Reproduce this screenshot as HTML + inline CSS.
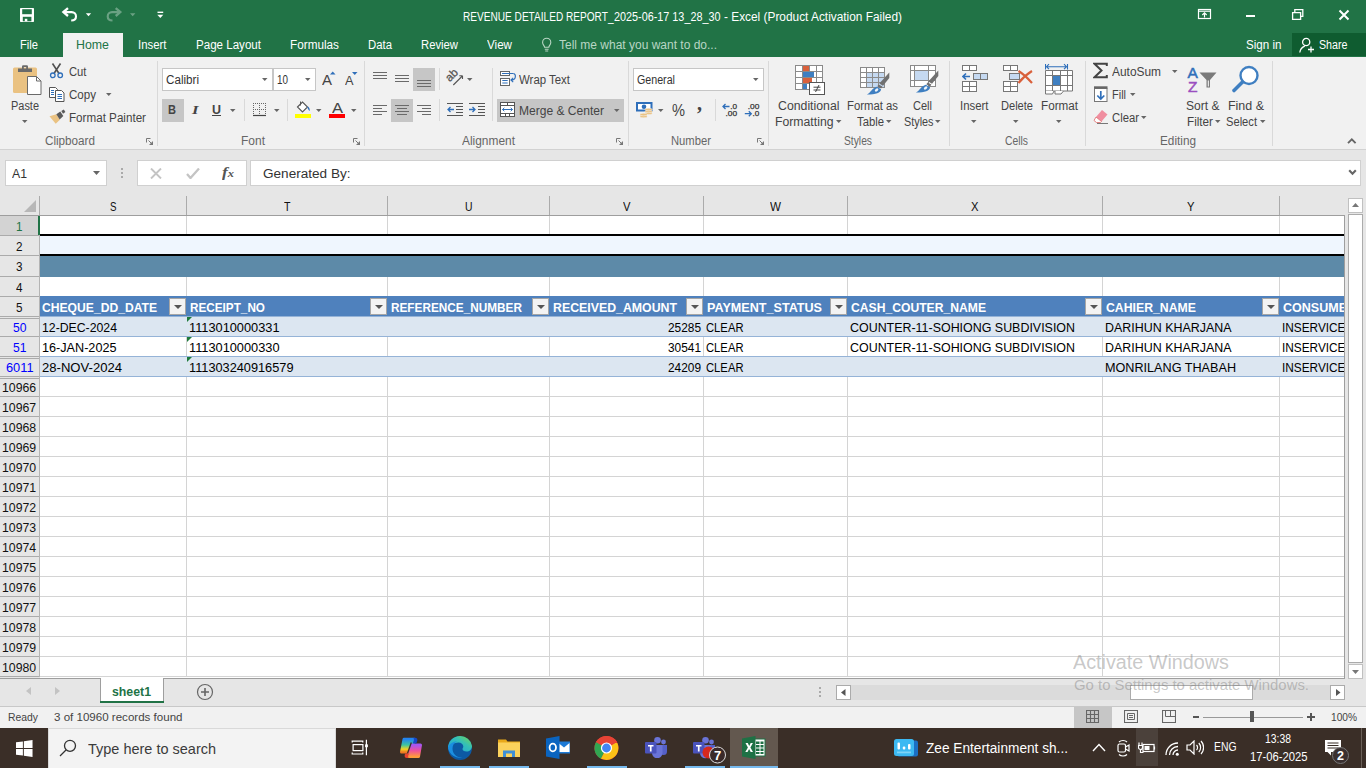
<!DOCTYPE html>
<html><head><meta charset="utf-8"><title>Excel</title>
<style>
*{box-sizing:border-box;margin:0;padding:0}
html,body{width:1366px;height:768px;overflow:hidden;background:#fff}
body{position:relative;font-family:"Liberation Sans",sans-serif;font-size:12px;color:#444}
.a{position:absolute}
.t{position:absolute;white-space:nowrap;transform-origin:0 50%;line-height:16px;height:16px}
.w{color:#fff}
#title{left:0;top:0;width:1366px;height:57px;background:#217346}
#hometab{left:63px;top:33px;width:60px;height:24px;background:#f1f1f1}
#share{left:1292px;top:33px;width:74px;height:23px;background:#0f5c30}
#ribbon{left:0;top:57px;width:1366px;height:92px;background:#f1f1f1}
#ribline{left:0;top:149px;width:1366px;height:1px;background:#d2d2d2}
#fbar{left:0;top:150px;width:1366px;height:46px;background:#e6e6e6}
#grid{left:0;top:196px;width:1366px;height:481px;background:#fff}
#tabs{left:0;top:677px;width:1366px;height:30px;background:#e6e6e6}
#status{left:0;top:707px;width:1366px;height:21px;background:#f1f1f1}
#task{left:0;top:728px;width:1366px;height:40px;background:#3a2e27}
.sep{position:absolute;width:1px;background:#d9d9d9;top:66px;height:78px}
.g{color:#666}
.box{background:#fff;border:1px solid #c6c6c6}
.gl{position:absolute;top:95px;height:16px;line-height:16px;color:#555;font-size:12px}

.cf{font-size:12.500px;color:#000;margin-top:1px}
.hd{font-size:13px;color:#111;margin-top:1px}
.rn{font-size:13.500px;color:#111;margin-top:1px}
.vl{position:absolute;width:1px;background:#d4d4d4}
.hl{position:absolute;height:1px;background:#d4d4d4;left:40px;width:1304px}
.fb{position:absolute;width:17px;height:17px;background:#f3f3f3;border:1px solid #a6a6a6}
.fb:after{content:"";position:absolute;left:4px;top:6px;border:4px solid transparent;border-top:4px solid #555;border-bottom:0}
.tri{position:absolute;width:0;height:0;border-top:5px solid #1e7a3c;border-right:5px solid transparent}
</style></head><body>
<div class="a" id="title"></div>
<div class="a" id="hometab"></div>
<div class="a" id="share"></div>

<!-- title bar -->
<svg class="a" style="left:18px;top:6px" width="150" height="20" viewBox="0 0 150 20" fill="none" stroke="#fff">
 <rect x="2" y="1.900" width="14" height="14" rx=".700" fill="#fff" stroke="none"/><rect x="4.200" y="3.200" width="9.600" height="5" fill="#217346" stroke="none"/><rect x="4.800" y="10.800" width="8.600" height="4.500" fill="#217346" stroke="none"/><rect x="6.800" y="12.800" width="2.500" height="2.500" fill="#fff" stroke="none"/>
 <path d="M50 2.200l-4.600 3.900 4.600 3.900" stroke-width="2.300"/><path d="M46.500 6.100h7.200a4.300 4.300 0 0 1 4.300 4.300c0 2.400-1.900 4-4.800 4.100" stroke-width="2.100"/>
 <path d="M67.800 7.200h5.400l-2.700 3z" fill="#fff" stroke="none"/>
 <g opacity=".33"><path d="M97.700 2.200l4.600 3.900-4.600 3.900" stroke-width="2.300"/><path d="M101.200 6.100h-7.200a4.300 4.300 0 0 0-4.300 4.300c0 2.400 1.900 4 4.800 4.100" stroke-width="2.100"/><path d="M112 7.200h5.400l-2.700 3z" fill="#fff" stroke="none"/></g>
 <path d="M139.500 6.300h5.700" stroke-width="1.400"/><path d="M139.300 8.800h6l-3 3.300z" fill="#fff" stroke="none"/>
</svg>
<span class="t w" style="transform:scaleX(0.8074);left:462.5px;top:9px;font-size:12.5px">REVENUE DETAILED REPORT_</span><span class="t w" style="transform:scaleX(0.8656);left:613.5px;top:9px;font-size:12.5px">2025-06-17 13_28_30</span><span class="t w" style="transform:scaleX(0.9489);left:723.5px;top:9px;font-size:12.5px">- Excel (Product Activation Failed)</span>
<svg class="a" style="left:1194px;top:5px" width="165" height="20" viewBox="0 0 165 20" fill="none" stroke="#fff">
 <rect x="4.5" y="4.5" width="12" height="9" stroke-width="1.2"/><path d="M4.5 6.2h12" stroke-width="1.2"/><path d="M10.5 12.5v-4.5M8.3 10l2.2-2.2 2.2 2.2" stroke-width="1.2"/>
 <path d="M52 11h9" stroke-width="2"/>
 <path d="M98.6 7.6h8v6.8h-8z" stroke-width="1.3"/><path d="M100.8 7.4v-2.8h8v6.8h-2" stroke-width="1.3"/>
 <path d="M145.5 5.5l9 9M154.5 5.5l-9 9" stroke-width="2"/>
</svg>
<!-- tabs -->
<span class="t w" style="transform:scaleX(0.8930);left:20px;top:37px;font-size:12.5px">File</span>
<span class="t" style="transform:scaleX(0.9897);left:76px;top:37px;font-size:12.5px;color:#217346">Home</span>
<span class="t w" style="transform:scaleX(0.9115);left:138px;top:37px;font-size:12.5px">Insert</span>
<span class="t w" style="transform:scaleX(0.9259);left:196px;top:37px;font-size:12.5px">Page Layout</span>
<span class="t w" style="transform:scaleX(0.9406);left:290px;top:37px;font-size:12.5px">Formulas</span>
<span class="t w" style="transform:scaleX(0.9089);left:368px;top:37px;font-size:12.5px">Data</span>
<span class="t w" style="transform:scaleX(0.9024);left:421px;top:37px;font-size:12.5px">Review</span>
<span class="t w" style="transform:scaleX(0.9302);left:487px;top:37px;font-size:12.5px">View</span>
<svg class="a" style="left:540px;top:36px" width="14" height="18" viewBox="0 0 14 18" fill="none" stroke="#b9d6c4" stroke-width="1.1"><path d="M4.6 11.2c0-1.6-2-2.4-2-4.8a4.1 4.1 0 0 1 8.2 0c0 2.400-2 3.200-2 4.800z"/><path d="M4.800 13.200h3.800M5.200 15h3"/></svg>
<span class="t" style="transform:scaleX(0.9595);left:559px;top:37px;font-size:12.5px;color:#b9d6c4">Tell me what you want to do...</span>
<span class="t w" style="transform:scaleX(0.9285);left:1246px;top:37px;font-size:12.5px">Sign in</span>
<svg class="a" style="left:1298px;top:36px" width="18" height="18" viewBox="0 0 18 18" fill="none" stroke="#fff" stroke-width="1.300"><circle cx="8.200" cy="6" r="3.600"/><path d="M1.800 16.500c.5-3.600 2.800-5.600 5-6.400M9.500 10.200"/><path d="M13 10.500v6M10 13.500h6"/></svg>
<span class="t w" style="transform:scaleX(0.8543);left:1318.500px;top:37px;font-size:12.5px">Share</span>
<div class="a" id="ribbon"></div>
<div class="a" id="ribline"></div>
<!-- ===== Clipboard ===== -->
<svg class="a" style="left:10px;top:62px" width="36" height="36" viewBox="0 0 36 36">
 <rect x="3" y="5.500" width="24" height="25.500" rx="1.500" fill="#eac282"/>
 <path d="M8 6.500h14v3.500h-14z" fill="#6a6a6a"/><path d="M12 7v-2.500a1.200 1.200 0 0 1 1.200-1.200h3.600a1.200 1.200 0 0 1 1.200 1.200v2.500h-1.800v-2h-2.400v2z" fill="#6a6a6a"/>
 <path d="M17.500 14.500h9l4.500 4.500v13.500h-13.500z" fill="#fff" stroke="#6a6a6a" stroke-width="1"/><path d="M26.500 14.500v4.500h4.500" fill="none" stroke="#6a6a6a"/>
</svg>
<span class="t" style="transform:scaleX(0.9124);left:11px;top:98.4px">Paste</span>
<svg class="a" style="left:22px;top:120px" width="6" height="4"><path d="M0 0h5.500l-2.750 3z" fill="#666"/></svg>
<svg class="a" style="left:48px;top:62px" width="18" height="18" viewBox="0 0 18 18" fill="none">
 <path d="M4.500 1.500l6.500 10M12.500 1.500l-6.500 10" stroke="#505050" stroke-width="1.600"/>
 <circle cx="4.800" cy="13.300" r="2.300" stroke="#2f6fba" stroke-width="1.300"/><circle cx="12.200" cy="13.300" r="2.300" stroke="#2f6fba" stroke-width="1.300"/>
</svg>
<span class="t" style="transform:scaleX(0.9365);left:69px;top:64.4px">Cut</span>
<svg class="a" style="left:48px;top:86px" width="18" height="17" viewBox="0 0 18 17" fill="#fff" stroke="#555" stroke-width="1">
 <path d="M1.500 1.500h6l2 2v8h-8z"/><path d="M3 4.500h3M3 6.500h3M3 8.500h3" stroke="#2f6fba"/>
 <path d="M7.500 4.500h6l2.500 2.500v8.500h-8.500z"/><path d="M9.500 8.500h4.500M9.500 10.500h4.500M9.500 12.500h4.500" stroke="#2f6fba"/>
</svg>
<span class="t" style="transform:scaleX(0.9637);left:69px;top:87.4px">Copy</span>
<svg class="a" style="left:106px;top:93px" width="6" height="4"><path d="M0 0h5.500l-2.750 3z" fill="#666"/></svg>
<svg class="a" style="left:48px;top:109px" width="18" height="16" viewBox="0 0 18 16">
 <path d="M1.500 7.200l6.800-1.900 3.600 5.400-4.200 4z" fill="#eac282"/><path d="M8.300 5.200l4-2.600 3 4.500-3.600 3.400z" fill="#5a5a5a"/><path d="M13.300 2.100l2.500-1.600 1.600 2.400-2.400 1.800z" fill="#5a5a5a"/>
</svg>
<span class="t" style="transform:scaleX(0.9703);left:69px;top:110.4px">Format Painter</span>
<span class="t g" style="transform:scaleX(0.9732);left:45px;top:133.4px">Clipboard</span>
<svg class="a lau" style="left:146px;top:138px" width="8" height="8" viewBox="0 0 8 8" fill="none" stroke="#777"><path d="M.500 4.500v-4h4"/><path d="M2.500 2.500l3.500 3.500"/><path d="M7 3v4h-4z" fill="#777" stroke="none"/></svg>
<div class="sep" style="left:157px;top:61px;height:85px"></div>
<!-- ===== Font ===== -->
<div class="a box" style="left:162px;top:68px;width:111px;height:23px"></div>
<div class="a box" style="left:273px;top:68px;width:43px;height:23px"></div>
<span class="t" style="transform:scaleX(0.9701);left:166px;top:72.4px;color:#333">Calibri</span>
<svg class="a" style="left:262px;top:78px" width="6" height="4"><path d="M0 0h5.500l-2.750 3z" fill="#666"/></svg>
<span class="t" style="transform:scaleX(0.8234);left:277px;top:72.4px;color:#333">10</span>
<svg class="a" style="left:305px;top:78px" width="6" height="4"><path d="M0 0h5.500l-2.750 3z" fill="#666"/></svg>
<span class="t" style="transform:scaleX(0.9984);left:322px;top:72.4px;font-size:15px">A</span>
<svg class="a" style="left:330px;top:71px" width="6" height="4"><path d="M0 3.500h5.500l-2.750-3z" fill="#2f6fba"/></svg>
<span class="t" style="transform:scaleX(0.9802);left:345px;top:73.4px;font-size:13px">A</span>
<svg class="a" style="left:352px;top:72px" width="6" height="4"><path d="M0 0h5.500l-2.750 3z" fill="#2f6fba"/></svg>
<div class="a" style="left:162px;top:99px;width:22px;height:23px;background:#c6c6c6"></div>
<span class="t" style="transform:scaleX(0.8519);left:168px;top:102.4px;font-weight:bold;font-size:13px">B</span>
<span class="t" style="transform:scaleX(1.2840);left:192px;top:102.4px;font-style:italic;font-weight:bold;font-size:13px;font-family:'Liberation Serif',serif">I</span>
<span class="t" style="transform:scaleX(0.9584);left:212px;top:102.4px;font-size:13px;font-weight:bold;text-decoration:underline">U</span>
<svg class="a" style="left:230px;top:109px" width="6" height="4"><path d="M0 0h5.500l-2.750 3z" fill="#666"/></svg>
<div class="sep" style="left:244px;top:99px;height:22px"></div>
<svg class="a" style="left:252px;top:102px" width="15" height="15" viewBox="0 0 15 15" fill="none" stroke="#666" stroke-dasharray="1 1"><path d="M1 1.500h13M1 7.500h13M1.500 1v13M7.500 1v13M13.500 1v13"/><path d="M1 13.500h13" stroke-dasharray="none" stroke="#444" stroke-width="1.200"/></svg>
<svg class="a" style="left:274px;top:109px" width="6" height="4"><path d="M0 0h5.500l-2.750 3z" fill="#666"/></svg>
<div class="sep" style="left:287px;top:99px;height:22px"></div>
<svg class="a" style="left:294px;top:100px" width="18" height="14" viewBox="0 0 18 14" fill="none"><path d="M3.500 7l5-5 5 5-5 5z" fill="#fff" stroke="#555" stroke-width="1.100"/><path d="M6.500 1.500v4" stroke="#555"/><path d="M13.500 6.500c1.500.5 2.500 2 2.200 4.500-1-.5-1.500-2-2.200-3z" fill="#2f6fba"/></svg>
<div class="a" style="left:295px;top:114px;width:16px;height:4px;background:#ffff00"></div>
<svg class="a" style="left:316px;top:109px" width="6" height="4"><path d="M0 0h5.500l-2.750 3z" fill="#666"/></svg>
<span class="t" style="transform:scaleX(1.1773);left:332px;top:100.4px;font-size:14px">A</span>
<div class="a" style="left:329px;top:114px;width:16px;height:4px;background:#ff0000"></div>
<svg class="a" style="left:351px;top:109px" width="6" height="4"><path d="M0 0h5.500l-2.750 3z" fill="#666"/></svg>
<span class="t g" style="transform:scaleX(0.9993);left:241px;top:133.4px">Font</span>
<svg class="a lau" style="left:353px;top:138px" width="8" height="8" viewBox="0 0 8 8" fill="none" stroke="#777"><path d="M.500 4.500v-4h4"/><path d="M2.500 2.500l3.500 3.500"/><path d="M7 3v4h-4z" fill="#777" stroke="none"/></svg>
<div class="sep" style="left:364px;top:61px;height:85px"></div>

<div class="a" id="fbar"></div>
<div class="a" id="grid"></div>
<div class="a" id="tabs"></div>
<div class="a" id="status"></div>
<div class="a" id="task"></div>
<!-- ===== Alignment ===== -->
<svg class="a" style="left:373px;top:72px" width="15" height="9" fill="#6a6a6a"><rect x="0" y="0" width="14" height="1"/><rect x="0" y="3" width="14" height="1"/><rect x="0" y="6" width="14" height="1"/></svg>
<svg class="a" style="left:395px;top:75px" width="15" height="9" fill="#6a6a6a"><rect x="0" y="0" width="14" height="1"/><rect x="0" y="3" width="14" height="1"/><rect x="0" y="6" width="14" height="1"/></svg>
<div class="a" style="left:413px;top:68px;width:22px;height:23px;background:#c6c6c6"></div>
<svg class="a" style="left:417px;top:80px" width="15" height="9" fill="#6a6a6a"><rect x="0" y="0" width="14" height="1"/><rect x="0" y="3" width="14" height="1"/><rect x="0" y="6" width="14" height="1"/></svg>
<div class="sep" style="left:439px;top:68px;height:22px"></div>
<svg class="a" style="left:446px;top:70px" width="20" height="18" viewBox="0 0 20 18" fill="none" stroke="#555" stroke-width="1.100"><path d="M7.300 15l9-9M16.500 5.800h-3.200M16.500 5.800v3.200"/><text x="0" y="0" transform="translate(3.800 12.300) rotate(-45)" font-size="11.500" font-family="Liberation Sans,sans-serif" fill="#555" stroke="#555" stroke-width=".300">ab</text></svg>
<svg class="a" style="left:467px;top:78px" width="6" height="4"><path d="M0 0h5.500l-2.750 3z" fill="#666"/></svg>
<div class="sep" style="left:492px;top:68px;height:53px"></div>
<svg class="a" style="left:499px;top:70px" width="18" height="17" viewBox="0 0 18 17" fill="none" stroke="#666"><rect x="1.500" y="1.500" width="9" height="4" fill="#fff"/><rect x="1.500" y="8.500" width="9" height="7" fill="#fff"/><path d="M3 3.500h11.500M3.300 10.500h5.400M3.300 13h5.400" stroke="#2f6fba"/><path d="M14.500 3.500c2.800 .800 2.800 6.500-2.300 6.500M14.200 7.800l-2.300 2.200 2.300 2.200" stroke="#2f6fba" stroke-width="1.100"/></svg>
<span class="t" style="transform:scaleX(0.9519);left:519px;top:72.4px">Wrap Text</span>
<svg class="a" style="left:373px;top:105px" width="15" height="12" fill="#6a6a6a"><rect x="0" y="0" width="14" height="1"/><rect x="0" y="3" width="9" height="1"/><rect x="0" y="6" width="14" height="1"/><rect x="0" y="9" width="9" height="1"/></svg>
<div class="a" style="left:391px;top:99px;width:22px;height:23px;background:#c6c6c6"></div>
<svg class="a" style="left:395px;top:105px" width="15" height="12" fill="#6a6a6a"><rect x="0" y="0" width="14" height="1"/><rect x="2" y="3" width="10" height="1"/><rect x="0" y="6" width="14" height="1"/><rect x="2" y="9" width="10" height="1"/></svg>
<svg class="a" style="left:417px;top:105px" width="15" height="12" fill="#6a6a6a"><rect x="0" y="0" width="14" height="1"/><rect x="5" y="3" width="9" height="1"/><rect x="0" y="6" width="14" height="1"/><rect x="5" y="9" width="9" height="1"/></svg>
<div class="sep" style="left:439px;top:99px;height:22px"></div>
<svg class="a" style="left:447px;top:103px" width="16" height="14" viewBox="0 0 16 14" fill="none" stroke="#555"><path d="M0 .500h16M9 3.500h7M9 6.500h7M9 9.500h7M0 12.500h16"/><path d="M1 6.500h6M3.500 4l-2.500 2.500 2.500 2.500" stroke="#2f6fba" stroke-width="1.300"/></svg>
<svg class="a" style="left:469px;top:103px" width="16" height="14" viewBox="0 0 16 14" fill="none" stroke="#555"><path d="M0 .500h16M9 3.500h7M9 6.500h7M9 9.500h7M0 12.500h16"/><path d="M0 6.500h6M3.500 4l2.500 2.500-2.500 2.500" stroke="#2f6fba" stroke-width="1.300"/></svg>
<div class="a" style="left:497px;top:99px;width:127px;height:23px;background:#c6c6c6"></div>
<svg class="a" style="left:500px;top:102px" width="15" height="15" viewBox="0 0 15 15" fill="none" stroke="#555"><rect x=".500" y=".500" width="14" height="14" fill="#fff"/><path d="M.500 3.500h14M.500 11.500h14M7.500 .500v3M5.500 11.500v3M9.500 11.500v3"/><path d="M2.500 7.500h10M4.300 5.800l-1.800 1.700 1.800 1.700M10.700 5.800l1.800 1.700-1.800 1.700" stroke="#2f6fba"/></svg>
<span class="t" style="transform:scaleX(1.0035);left:519px;top:103.4px">Merge &amp; Center</span>
<svg class="a" style="left:614px;top:109px" width="6" height="4"><path d="M0 0h5.500l-2.750 3z" fill="#666"/></svg>
<span class="t g" style="transform:scaleX(0.9930);left:462px;top:133.4px">Alignment</span>
<svg class="a lau" style="left:616px;top:138px" width="8" height="8" viewBox="0 0 8 8" fill="none" stroke="#777"><path d="M.500 4.500v-4h4"/><path d="M2.500 2.500l3.500 3.500"/><path d="M7 3v4h-4z" fill="#777" stroke="none"/></svg>
<div class="sep" style="left:628px;top:61px;height:85px"></div>
<!-- ===== Number ===== -->
<div class="a box" style="left:633px;top:68px;width:131px;height:23px"></div>
<span class="t" style="transform:scaleX(0.8899);left:637px;top:72.4px;color:#333">General</span>
<svg class="a" style="left:753px;top:78px" width="6" height="4"><path d="M0 0h5.500l-2.750 3z" fill="#666"/></svg>
<svg class="a" style="left:636px;top:101px" width="17" height="17" viewBox="0 0 17 17" fill="none"><rect x="1" y="2" width="14.500" height="7.500" fill="#fff" stroke="#2f6fba" stroke-width="2"/><circle cx="8" cy="5.700" r="2.300" fill="#2f6fba"/><g fill="#eac282" stroke="#f1f1f1" stroke-width=".500"><ellipse cx="12.600" cy="12.300" rx="3.600" ry="1.300"/><ellipse cx="12.600" cy="10.400" rx="3.600" ry="1.300"/><ellipse cx="12.600" cy="8.500" rx="3.600" ry="1.300"/><ellipse cx="7.600" cy="15.400" rx="3.600" ry="1.300"/><ellipse cx="7.600" cy="13.500" rx="3.600" ry="1.300"/></g></svg>
<svg class="a" style="left:658px;top:109px" width="6" height="4"><path d="M0 0h5.500l-2.750 3z" fill="#666"/></svg>
<span class="t" style="transform:scaleX(0.8860);left:672px;top:102.4px;font-size:16.500px">%</span>
<span class="t" style="transform:scaleX(1.0000);left:697px;top:95.4px;font-size:20px;font-weight:bold;font-family:'Liberation Serif',serif">,</span>
<div class="sep" style="left:715px;top:99px;height:22px"></div>
<svg class="a" style="left:722px;top:102px" width="16" height="16" viewBox="0 0 16 16" font-family="Liberation Sans,sans-serif" font-size="8" fill="#333" stroke="#333" stroke-width=".250"><path d="M1 4.500h6.500M3.500 2l-2.500 2.500 2.500 2.500" fill="none" stroke="#2f6fba" stroke-width="1.300"/><text x="8.300" y="7" textLength="6.800" lengthAdjust="spacingAndGlyphs">.0</text><text x="3.500" y="14.200" textLength="11.600" lengthAdjust="spacingAndGlyphs">.00</text></svg>
<svg class="a" style="left:744px;top:102px" width="16" height="16" viewBox="0 0 16 16" font-family="Liberation Sans,sans-serif" font-size="8" fill="#333" stroke="#333" stroke-width=".250"><text x="3.700" y="7" textLength="11.600" lengthAdjust="spacingAndGlyphs">.00</text><path d="M.800 11.700h6.500M4.800 9.200l2.500 2.500-2.500 2.500" fill="none" stroke="#2f6fba" stroke-width="1.300"/><text x="8.500" y="14.200" textLength="6.800" lengthAdjust="spacingAndGlyphs">.0</text></svg>
<span class="t g" style="transform:scaleX(0.9370);left:671px;top:133.4px">Number</span>
<svg class="a lau" style="left:757px;top:138px" width="8" height="8" viewBox="0 0 8 8" fill="none" stroke="#777"><path d="M.500 4.500v-4h4"/><path d="M2.500 2.500l3.500 3.500"/><path d="M7 3v4h-4z" fill="#777" stroke="none"/></svg>
<div class="sep" style="left:768px;top:61px;height:85px"></div>
<!-- ===== Styles ===== -->
<svg class="a" style="left:795px;top:65px" width="31" height="30" viewBox="0 0 31 30" fill="none">
<rect x=".500" y=".500" width="27" height="24" fill="#fff" stroke="#8a8a8a"/><path d="M.500 6.500h27M.500 12.500h27M.500 18.500h27M7.500 .500v24M14.500 .500v24M21.500 .500v24" stroke="#8a8a8a"/>
<rect x="8" y="1" width="6" height="5" fill="#d9603b"/><rect x="8" y="7" width="11" height="5" fill="#3f7fc1"/><rect x="8" y="13" width="9" height="5" fill="#d9603b"/><rect x="8" y="19" width="4" height="5" fill="#3f7fc1"/>
<rect x="14.500" y="17.500" width="15" height="12" fill="#fff" stroke="#555"/><path d="M18.500 22.200h7M18.500 25h7M24 20l-3.500 7" stroke="#333" stroke-width=".900"/></svg>
<span class="t" style="transform:scaleX(1.0242);left:778px;top:98.4px">Conditional</span>
<span class="t" style="transform:scaleX(1.0199);left:775px;top:114.4px">Formatting</span>
<svg class="a" style="left:836px;top:120px" width="6" height="4"><path d="M0 0h5.500l-2.750 3z" fill="#666"/></svg>
<svg class="a" style="left:860px;top:65px" width="31" height="31" viewBox="0 0 31 31" fill="none">
<rect x=".500" y="2.500" width="24" height="20" fill="#fff" stroke="#8a8a8a"/><rect x="6" y="8" width="18" height="14" fill="#c5d9f1"/><path d="M.500 7.500h24M.500 12.500h24M.500 17.500h24M6.500 2.500v20M12.500 2.500v20M18.500 2.500v20" stroke="#8a8a8a"/>
<g transform="translate(0 0)"><path d="M29.300 7.600v5.400l-6.300 7.700-3.700-2.100z" fill="#707070"/><path d="M18.700 19.400l3.700 2.200-1.300 1.900-3.800-2.300z" fill="#707070"/><path d="M16.800 21.700l4.300 2.500c-.3 3.400-5 5.300-14.300 5.400 4.200-2 5-6.600 10-7.900z" fill="#3f7fc1"/><ellipse cx="16.600" cy="25" rx="2" ry="1.300" transform="rotate(-40 16.600 25)" fill="#fff" opacity=".92"/></g></svg>
<span class="t" style="transform:scaleX(0.9442);left:847px;top:98.4px">Format as</span>
<span class="t" style="transform:scaleX(0.9412);left:857px;top:114.4px">Table</span>
<svg class="a" style="left:886px;top:120px" width="6" height="4"><path d="M0 0h5.500l-2.750 3z" fill="#666"/></svg>
<svg class="a" style="left:909px;top:65px" width="31" height="31" viewBox="0 0 31 31" fill="none">
<rect x="1.500" y=".500" width="25" height="21" fill="#fff" stroke="#8a8a8a"/><rect x="5.500" y="5" width="14" height="10" fill="#c5d9f1"/><path d="M1.500 5.500h25M1.500 15.500h25M5.500 .500v21M19.500 .500v21" stroke="#8a8a8a"/>
<g transform="translate(0 -2)"><path d="M29.300 7.600v5.400l-6.300 7.700-3.700-2.100z" fill="#707070"/><path d="M18.700 19.400l3.700 2.200-1.300 1.900-3.800-2.300z" fill="#707070"/><path d="M16.800 21.700l4.300 2.500c-.3 3.400-5 5.300-14.300 5.400 4.200-2 5-6.600 10-7.900z" fill="#3f7fc1"/><ellipse cx="16.600" cy="25" rx="2" ry="1.300" transform="rotate(-40 16.600 25)" fill="#fff" opacity=".92"/></g></svg>
<span class="t" style="transform:scaleX(0.9191);left:913px;top:98.4px">Cell</span>
<span class="t" style="transform:scaleX(0.9025);left:904px;top:114.4px">Styles</span>
<svg class="a" style="left:935px;top:120px" width="6" height="4"><path d="M0 0h5.500l-2.750 3z" fill="#666"/></svg>
<span class="t g" style="transform:scaleX(0.8566);left:844px;top:133.4px">Styles</span>
<div class="sep" style="left:949px;top:61px;height:85px"></div>
<!-- ===== Cells ===== -->
<svg class="a" style="left:962px;top:65px" width="29" height="28" viewBox="0 0 29 28" fill="none" stroke="#777">
<rect x=".500" y=".500" width="14" height="5" fill="#fff"/><path d="M7.500 .500v5"/>
<rect x="11.500" y="8.500" width="14" height="6" fill="#c5d9f1"/><path d="M18.500 8.500v6"/>
<rect x=".500" y="16.500" width="14" height="10" fill="#fff"/><path d="M.500 21.500h14M7.500 16.500v10"/>
<path d="M1 11.500h7M4 8.500l-3 3 3 3" stroke="#2f6fba" stroke-width="1.600"/></svg>
<span class="t" style="transform:scaleX(0.9495);left:960px;top:98.4px">Insert</span>
<svg class="a" style="left:971px;top:120px" width="6" height="4"><path d="M0 0h5.500l-2.750 3z" fill="#666"/></svg>
<svg class="a" style="left:1003px;top:65px" width="32" height="28" viewBox="0 0 32 28" fill="none" stroke="#777">
<rect x=".500" y=".500" width="14" height="5" fill="#fff"/><path d="M7.500 .500v5"/>
<rect x="6.500" y="8.500" width="10" height="6" fill="#c5d9f1"/>
<rect x=".500" y="16.500" width="14" height="10" fill="#fff"/><path d="M.500 21.500h14M7.500 16.500v10"/>
<path d="M15.500 6c5 3 9 7 13.500 12M29 6c-5 3-9.500 7-13.500 12" stroke="#d9603b" stroke-width="2.200"/></svg>
<span class="t" style="transform:scaleX(0.9225);left:1001px;top:98.4px">Delete</span>
<svg class="a" style="left:1013px;top:120px" width="6" height="4"><path d="M0 0h5.500l-2.750 3z" fill="#666"/></svg>
<svg class="a" style="left:1045px;top:62px" width="29" height="33" viewBox="0 0 29 33" fill="none" stroke="#777">
<path d="M.500 2v5.500M22.500 2v5.500M1.500 4.700h20M4 2.200l-2.500 2.500 2.500 2.500M19 2.200l2.500 2.500-2.500 2.500" stroke="#2f6fba" stroke-width="1.100"/>
<path d="M.500 8.500h27v20.500h-27z" fill="#fff"/><path d="M.500 13.500h27M.500 23.500h27M7.500 8.500v20.500M15.500 8.500v20.500M22.500 8.500v20.500"/>
<path d="M.500 29v3h7l1.500-3M10 29v3h6l2.500-3" fill="#fff"/>
<rect x="8" y="14" width="7" height="9" fill="#3f7fc1" stroke="none"/></svg>
<span class="t" style="transform:scaleX(0.9733);left:1041px;top:98.4px">Format</span>
<svg class="a" style="left:1056px;top:120px" width="6" height="4"><path d="M0 0h5.500l-2.750 3z" fill="#666"/></svg>
<span class="t g" style="transform:scaleX(0.8623);left:1005px;top:133.4px">Cells</span>
<div class="sep" style="left:1085px;top:61px;height:85px"></div>
<!-- ===== Editing ===== -->
<svg class="a" style="left:1093px;top:62px" width="16" height="17" viewBox="0 0 16 17" fill="none"><path d="M13.800 4v-2.200h-12.300l7 6.700-7 6.700h12.300v-2.200" stroke="#444" stroke-width="2"/></svg>
<span class="t" style="transform:scaleX(0.9927);left:1112px;top:64.4px">AutoSum</span>
<svg class="a" style="left:1172px;top:70px" width="6" height="4"><path d="M0 0h5.500l-2.750 3z" fill="#666"/></svg>
<svg class="a" style="left:1093px;top:86px" width="16" height="17" viewBox="0 0 16 17" fill="none"><rect x="1.500" y="2.500" width="12.500" height="13" fill="#fff" stroke="#777"/><path d="M1 1.500h13.500" stroke="#666" stroke-width="2.400"/><path d="M7.800 5v8M4.300 9.500l3.500 3.500 3.500-3.500" stroke="#2f6fba" stroke-width="1.700"/></svg>
<span class="t" style="transform:scaleX(0.9134);left:1112px;top:87.4px">Fill</span>
<svg class="a" style="left:1130px;top:93px" width="6" height="4"><path d="M0 0h5.500l-2.750 3z" fill="#666"/></svg>
<svg class="a" style="left:1093px;top:109px" width="16" height="15" viewBox="0 0 16 15" fill="none"><path d="M9 1l5.500 4.500-6 7-5.500-4.500z" fill="#f08ea0"/><path d="M3 8l5.500 4.500-1 1h-4l-2.500-2z" fill="#fff" stroke="#d66" stroke-width=".800"/><path d="M4 14.500h11" stroke="#777"/></svg>
<span class="t" style="transform:scaleX(0.9412);left:1112px;top:110.4px">Clear</span>
<svg class="a" style="left:1141px;top:116px" width="6" height="4"><path d="M0 0h5.500l-2.750 3z" fill="#666"/></svg>
<svg class="a" style="left:1187px;top:64px" width="32" height="30" viewBox="0 0 32 30" fill="none" font-family="Liberation Sans,sans-serif" font-size="15.500" stroke-width=".500">
<text x=".500" y="13.700" fill="#2f6fba" stroke="#2f6fba">A</text><text x="1" y="27.600" fill="#9b4fc0" stroke="#9b4fc0">Z</text>
<path d="M12.500 8.500h17l-6.500 7.500v7.500h-3.500v-7.500z" fill="#7a7a7a"/><path d="M20.800 16.500v6h1v-6z" fill="#fff"/></svg>
<span class="t" style="transform:scaleX(1.0042);left:1186px;top:98.4px">Sort &amp;</span>
<span class="t" style="transform:scaleX(0.9748);left:1187px;top:114.4px">Filter</span>
<svg class="a" style="left:1215px;top:120px" width="6" height="4"><path d="M0 0h5.500l-2.750 3z" fill="#666"/></svg>
<svg class="a" style="left:1231px;top:64px" width="30" height="32" viewBox="0 0 30 32" fill="none" stroke="#3f7fc1"><circle cx="18" cy="11.500" r="8.500" stroke-width="2.400" fill="#fff"/><path d="M11.500 18l-8.500 8.500" stroke-width="3.600" stroke-linecap="round"/></svg>
<span class="t" style="transform:scaleX(1.0378);left:1228px;top:98.4px">Find &amp;</span>
<span class="t" style="transform:scaleX(0.9293);left:1226px;top:114.4px">Select</span>
<svg class="a" style="left:1260px;top:120px" width="6" height="4"><path d="M0 0h5.500l-2.750 3z" fill="#666"/></svg>
<span class="t g" style="transform:scaleX(0.9808);left:1160px;top:133.4px">Editing</span>
<div class="sep" style="left:1272px;top:61px;height:85px"></div>
<svg class="a" style="left:1347px;top:137px" width="10" height="8" viewBox="0 0 10 8" fill="none" stroke="#666" stroke-width="1.900"><path d="M1 6.200l3.800-3.800 3.800 3.800"/></svg>
<!-- ===== formula bar ===== -->
<div class="a" style="left:5px;top:160px;width:102px;height:26px;background:#fff;border:1px solid #d0d0d0"></div>
<span class="t" style="transform:scaleX(0.9806);left:12px;top:166.4px;font-size:12.500px;color:#333">A1</span>
<svg class="a" style="left:93px;top:171px" width="8" height="5"><path d="M0 0h7l-3.500 4z" fill="#666"/></svg>
<div class="a" style="left:121px;top:168px;width:2px;height:2px;background:#aaa;box-shadow:0 4px #aaa,0 8px #aaa"></div>
<div class="a" style="left:137px;top:160px;width:110px;height:26px;background:#fff;border:1px solid #d0d0d0"></div>
<svg class="a" style="left:150px;top:168px" width="12" height="11" fill="none" stroke="#c4c4c4" stroke-width="1.900"><path d="M1 .500l10 10M11 .500l-10 10"/></svg>
<svg class="a" style="left:186px;top:168px" width="14" height="11" fill="none" stroke="#c4c4c4" stroke-width="2.300"><path d="M1 6l3.500 4l8.500-9.500"/></svg>
<span class="t" style="transform:scaleX(1.2407);left:222px;top:165.4px;font-size:14px;font-style:italic;font-weight:bold;font-family:'Liberation Serif',serif;color:#555">f<span style="font-size:10px">x</span></span>
<div class="a" style="left:250px;top:160px;width:1111px;height:26px;background:#fff;border:1px solid #d0d0d0"></div>
<span class="t" style="transform:scaleX(1.0855);left:263px;top:166.4px;font-size:12.500px;color:#333">Generated By:</span>
<svg class="a" style="left:1348px;top:169px" width="9" height="7" fill="none" stroke="#666" stroke-width="2.100"><path d="M1.200 1.200l3.300 3.600l3.300-3.600"/></svg>
<!-- ===== grid ===== -->
<div class="a" style="left:0;top:196px;width:1345px;height:20px;background:#e6e6e6"></div>
<div class="a" style="left:0;top:216px;width:40px;height:461px;background:#e6e6e6"></div>
<div class="a" style="left:1345px;top:196px;width:21px;height:481px;background:#e6e6e6"></div>
<div class="a" style="left:0;top:216px;width:39px;height:19px;background:#d3d3d3"></div>
<svg class="a" style="left:24px;top:200px" width="12" height="12"><path d="M12 0v12h-12z" fill="#b7b7b7"/></svg>
<span class="t hd" style="transform:scaleX(0.7495);left:110.0px;top:198px">S</span>
<span class="t hd" style="transform:scaleX(0.8173);left:283.8px;top:198px">T</span>
<span class="t hd" style="transform:scaleX(0.7987);left:464.6px;top:198px">U</span>
<span class="t hd" style="transform:scaleX(0.8649);left:622.6px;top:198px">V</span>
<span class="t hd" style="transform:scaleX(0.8957);left:770.2px;top:198px">W</span>
<span class="t hd" style="transform:scaleX(0.8649);left:970.9px;top:198px">X</span>
<span class="t hd" style="transform:scaleX(0.8649);left:1187.2px;top:198px">Y</span>
<div class="vl" style="left:39px;top:196px;height:20px;background:#ababab"></div>
<div class="vl" style="left:186px;top:196px;height:20px;background:#ababab"></div>
<div class="vl" style="left:387px;top:196px;height:20px;background:#ababab"></div>
<div class="vl" style="left:549px;top:196px;height:20px;background:#ababab"></div>
<div class="vl" style="left:703px;top:196px;height:20px;background:#ababab"></div>
<div class="vl" style="left:847px;top:196px;height:20px;background:#ababab"></div>
<div class="vl" style="left:1102px;top:196px;height:20px;background:#ababab"></div>
<div class="vl" style="left:1279px;top:196px;height:20px;background:#ababab"></div>
<div class="a" style="left:0;top:215px;width:1345px;height:1px;background:#9e9e9e"></div>
<div class="a" style="left:39px;top:216px;width:1px;height:461px;background:#b4b4b4"></div>
<div class="a" style="left:40px;top:234px;width:1304px;height:2px;background:#000"></div>
<div class="a" style="left:40px;top:236px;width:1304px;height:18px;background:#eff6fe"></div>
<div class="a" style="left:40px;top:254px;width:1304px;height:2px;background:#000"></div>
<div class="a" style="left:40px;top:256px;width:1304px;height:21px;background:#5d8aa8"></div>
<div class="a" style="left:40px;top:296px;width:1304px;height:20px;background:#4f81bd"></div>
<div class="a" style="left:40px;top:316px;width:1304px;height:21px;background:#dce6f1;border-top:1px solid #95b3d7;border-bottom:1px solid #95b3d7"></div>
<div class="a" style="left:40px;top:356px;width:1304px;height:21px;background:#dce6f1;border-top:1px solid #95b3d7;border-bottom:1px solid #95b3d7"></div>
<div class="hl" style="top:396px"></div>
<div class="hl" style="top:416px"></div>
<div class="hl" style="top:436px"></div>
<div class="hl" style="top:456px"></div>
<div class="hl" style="top:476px"></div>
<div class="hl" style="top:496px"></div>
<div class="hl" style="top:516px"></div>
<div class="hl" style="top:536px"></div>
<div class="hl" style="top:556px"></div>
<div class="hl" style="top:576px"></div>
<div class="hl" style="top:596px"></div>
<div class="hl" style="top:616px"></div>
<div class="hl" style="top:636px"></div>
<div class="hl" style="top:656px"></div>
<div class="vl" style="left:186px;top:216px;height:18px"></div>
<div class="vl" style="left:186px;top:277px;height:19px"></div>
<div class="vl" style="left:186px;top:337px;height:19px"></div>
<div class="vl" style="left:186px;top:377px;height:301px"></div>
<div class="vl" style="left:387px;top:216px;height:18px"></div>
<div class="vl" style="left:387px;top:277px;height:19px"></div>
<div class="vl" style="left:387px;top:337px;height:19px"></div>
<div class="vl" style="left:387px;top:377px;height:301px"></div>
<div class="vl" style="left:549px;top:216px;height:18px"></div>
<div class="vl" style="left:549px;top:277px;height:19px"></div>
<div class="vl" style="left:549px;top:337px;height:19px"></div>
<div class="vl" style="left:549px;top:377px;height:301px"></div>
<div class="vl" style="left:703px;top:216px;height:18px"></div>
<div class="vl" style="left:703px;top:277px;height:19px"></div>
<div class="vl" style="left:703px;top:337px;height:19px"></div>
<div class="vl" style="left:703px;top:377px;height:301px"></div>
<div class="vl" style="left:847px;top:216px;height:18px"></div>
<div class="vl" style="left:847px;top:277px;height:19px"></div>
<div class="vl" style="left:847px;top:337px;height:19px"></div>
<div class="vl" style="left:847px;top:377px;height:301px"></div>
<div class="vl" style="left:1102px;top:216px;height:18px"></div>
<div class="vl" style="left:1102px;top:277px;height:19px"></div>
<div class="vl" style="left:1102px;top:337px;height:19px"></div>
<div class="vl" style="left:1102px;top:377px;height:301px"></div>
<div class="vl" style="left:1279px;top:216px;height:18px"></div>
<div class="vl" style="left:1279px;top:277px;height:19px"></div>
<div class="vl" style="left:1279px;top:337px;height:19px"></div>
<div class="vl" style="left:1279px;top:377px;height:301px"></div>
<span class="t rn" style="transform:scaleX(0.8649);left:16.4px;top:218px;color:#217346">1</span>
<div class="a" style="left:0;top:235px;width:39px;height:1px;background:#ababab"></div>
<span class="t rn" style="transform:scaleX(0.8649);left:16.4px;top:238px;">2</span>
<div class="a" style="left:0;top:255px;width:39px;height:1px;background:#ababab"></div>
<span class="t rn" style="transform:scaleX(0.8649);left:16.4px;top:258px;">3</span>
<div class="a" style="left:0;top:276px;width:39px;height:1px;background:#ababab"></div>
<span class="t rn" style="transform:scaleX(0.8649);left:16.4px;top:279px;">4</span>
<div class="a" style="left:0;top:296px;width:39px;height:1px;background:#ababab"></div>
<span class="t rn" style="transform:scaleX(0.8649);left:16.4px;top:299px;">5</span>
<div class="a" style="left:0;top:316px;width:39px;height:1px;background:#ababab"></div>
<span class="t rn" style="transform:scaleX(0.8981);left:12.9px;top:319px;color:#0000ff">50</span>
<div class="a" style="left:0;top:336px;width:39px;height:1px;background:#ababab"></div>
<span class="t rn" style="transform:scaleX(0.8981);left:12.9px;top:339px;color:#0000ff">51</span>
<div class="a" style="left:0;top:356px;width:39px;height:1px;background:#ababab"></div>
<span class="t rn" style="transform:scaleX(0.9473);left:5.9px;top:359px;color:#0000ff">6011</span>
<div class="a" style="left:0;top:376px;width:39px;height:1px;background:#ababab"></div>
<span class="t rn" style="transform:scaleX(0.9109);left:2.2px;top:379px;">10966</span>
<div class="a" style="left:0;top:396px;width:39px;height:1px;background:#ababab"></div>
<span class="t rn" style="transform:scaleX(0.9109);left:2.2px;top:399px;">10967</span>
<div class="a" style="left:0;top:416px;width:39px;height:1px;background:#ababab"></div>
<span class="t rn" style="transform:scaleX(0.9109);left:2.2px;top:419px;">10968</span>
<div class="a" style="left:0;top:436px;width:39px;height:1px;background:#ababab"></div>
<span class="t rn" style="transform:scaleX(0.9109);left:2.2px;top:439px;">10969</span>
<div class="a" style="left:0;top:456px;width:39px;height:1px;background:#ababab"></div>
<span class="t rn" style="transform:scaleX(0.9109);left:2.2px;top:459px;">10970</span>
<div class="a" style="left:0;top:476px;width:39px;height:1px;background:#ababab"></div>
<span class="t rn" style="transform:scaleX(0.9109);left:2.2px;top:479px;">10971</span>
<div class="a" style="left:0;top:496px;width:39px;height:1px;background:#ababab"></div>
<span class="t rn" style="transform:scaleX(0.9109);left:2.2px;top:499px;">10972</span>
<div class="a" style="left:0;top:516px;width:39px;height:1px;background:#ababab"></div>
<span class="t rn" style="transform:scaleX(0.9109);left:2.2px;top:519px;">10973</span>
<div class="a" style="left:0;top:536px;width:39px;height:1px;background:#ababab"></div>
<span class="t rn" style="transform:scaleX(0.9109);left:2.2px;top:539px;">10974</span>
<div class="a" style="left:0;top:556px;width:39px;height:1px;background:#ababab"></div>
<span class="t rn" style="transform:scaleX(0.9109);left:2.2px;top:559px;">10975</span>
<div class="a" style="left:0;top:576px;width:39px;height:1px;background:#ababab"></div>
<span class="t rn" style="transform:scaleX(0.9109);left:2.2px;top:579px;">10976</span>
<div class="a" style="left:0;top:596px;width:39px;height:1px;background:#ababab"></div>
<span class="t rn" style="transform:scaleX(0.9109);left:2.2px;top:599px;">10977</span>
<div class="a" style="left:0;top:616px;width:39px;height:1px;background:#ababab"></div>
<span class="t rn" style="transform:scaleX(0.9109);left:2.2px;top:619px;">10978</span>
<div class="a" style="left:0;top:636px;width:39px;height:1px;background:#ababab"></div>
<span class="t rn" style="transform:scaleX(0.9109);left:2.2px;top:639px;">10979</span>
<div class="a" style="left:0;top:656px;width:39px;height:1px;background:#ababab"></div>
<span class="t rn" style="transform:scaleX(0.9109);left:2.2px;top:659px;">10980</span>
<div class="a" style="left:0;top:676px;width:39px;height:1px;background:#ababab"></div>
<div class="a" style="left:38px;top:216px;width:2px;height:19px;background:#217346"></div>
<div class="a" style="left:40px;top:676px;width:1304px;height:1px;background:#d4d4d4"></div>
<div class="a" style="left:1344px;top:216px;width:1px;height:462px;background:#9e9e9e"></div>
<span class="t" style="transform:scaleX(1.0106);left:42px;top:300px;font-size:12px;font-weight:bold;color:#fff">CHEQUE_DD_DATE</span>
<span class="t" style="transform:scaleX(0.9780);left:190px;top:300px;font-size:12px;font-weight:bold;color:#fff">RECEIPT_NO</span>
<span class="t" style="transform:scaleX(0.9823);left:391px;top:300px;font-size:12px;font-weight:bold;color:#fff">REFERENCE_NUMBER</span>
<span class="t" style="transform:scaleX(1.0274);left:553px;top:300px;font-size:12px;font-weight:bold;color:#fff">RECEIVED_AMOUNT</span>
<span class="t" style="transform:scaleX(1.0495);left:707px;top:300px;font-size:12px;font-weight:bold;color:#fff">PAYMENT_STATUS</span>
<span class="t" style="transform:scaleX(1.0123);left:851px;top:300px;font-size:12px;font-weight:bold;color:#fff">CASH_COUTER_NAME</span>
<span class="t" style="transform:scaleX(1.0225);left:1106px;top:300px;font-size:12px;font-weight:bold;color:#fff">CAHIER_NAME</span>
<div class="a" style="left:1280px;top:296px;width:64px;height:81px;overflow:hidden"><span class="t" style="transform:scaleX(1.0433);left:2.500px;top:4px;font-size:12px;font-weight:bold;color:#fff">CONSUME</span><span class="t cf" style="transform:scaleX(0.9456);left:1.8px;top:23px">INSERVICE</span><span class="t cf" style="transform:scaleX(0.9456);left:1.8px;top:43px">INSERVICE</span><span class="t cf" style="transform:scaleX(0.9456);left:1.8px;top:63px">INSERVICE</span></div>
<div class="fb" style="left:169px;top:298px"></div>
<div class="fb" style="left:370px;top:298px"></div>
<div class="fb" style="left:532px;top:298px"></div>
<div class="fb" style="left:686px;top:298px"></div>
<div class="fb" style="left:830px;top:298px"></div>
<div class="fb" style="left:1085px;top:298px"></div>
<div class="fb" style="left:1262px;top:298px"></div>
<div class="a" style="left:0;top:318px;width:39px;height:1px;background:#ababab"></div>
<div class="a" style="left:0;top:358px;width:39px;height:1px;background:#ababab"></div>
<div class="a" style="left:0;top:378px;width:39px;height:1px;background:#ababab"></div>
<!-- ===== cell data ===== -->
<span class="t cf" style="transform:scaleX(0.9812);left:41.8px;top:319px">12-DEC-2024</span>
<span class="t cf" style="transform:scaleX(1.0222);left:188.8px;top:319px">1113010000331</span>
<span class="t cf" style="transform:scaleX(0.9492);left:667.5px;top:319px">25285</span>
<span class="t cf" style="transform:scaleX(0.8996);left:705.8px;top:319px">CLEAR</span>
<span class="t cf" style="transform:scaleX(0.9947);left:849.8px;top:319px">COUNTER-11-SOHIONG SUBDIVISION</span>
<span class="t cf" style="transform:scaleX(0.9952);left:1104.8px;top:319px">DARIHUN KHARJANA</span>
<div class="tri" style="left:187px;top:317px"></div>
<span class="t cf" style="transform:scaleX(1.0115);left:41.8px;top:339px">16-JAN-2025</span>
<span class="t cf" style="transform:scaleX(1.0222);left:188.8px;top:339px">1113010000330</span>
<span class="t cf" style="transform:scaleX(0.9492);left:667.5px;top:339px">30541</span>
<span class="t cf" style="transform:scaleX(0.8996);left:705.8px;top:339px">CLEAR</span>
<span class="t cf" style="transform:scaleX(0.9947);left:849.8px;top:339px">COUNTER-11-SOHIONG SUBDIVISION</span>
<span class="t cf" style="transform:scaleX(0.9952);left:1104.8px;top:339px">DARIHUN KHARJANA</span>
<div class="tri" style="left:187px;top:337px"></div>
<span class="t cf" style="transform:scaleX(1.0466);left:41.8px;top:359px">28-NOV-2024</span>
<span class="t cf" style="transform:scaleX(1.0201);left:188.8px;top:359px">111303240916579</span>
<span class="t cf" style="transform:scaleX(0.9492);left:667.5px;top:359px">24209</span>
<span class="t cf" style="transform:scaleX(0.8996);left:705.8px;top:359px">CLEAR</span>
<span class="t cf" style="transform:scaleX(1.0104);left:1104.8px;top:359px">MONRILANG THABAH</span>
<div class="tri" style="left:187px;top:357px"></div>
<!-- ===== scrollbars ===== -->
<div class="a" style="left:1348px;top:198px;width:15px;height:15px;background:#fff;border:1px solid #c0c0c0"></div>
<svg class="a" style="left:1352px;top:203px" width="7" height="4"><path d="M0 4h7l-3.500-4z" fill="#777"/></svg>
<div class="a" style="left:1348px;top:214px;width:15px;height:449px;background:#fff;border:1px solid #ababab"></div>
<div class="a" style="left:1348px;top:664px;width:15px;height:15px;background:#fff;border:1px solid #c0c0c0"></div>
<svg class="a" style="left:1352px;top:670px" width="7" height="4"><path d="M0 0h7l-3.500 4z" fill="#777"/></svg>
<!-- ===== sheet tabs ===== -->
<div class="a" style="left:40px;top:677px;width:1304px;height:1px;background:#fff"></div><div class="a" style="left:0;top:678px;width:1345px;height:1px;background:#9e9e9e"></div>
<div class="a" style="left:100px;top:678px;width:64px;height:23px;background:#fff;border-left:1px solid #9e9e9e;border-right:1px solid #9e9e9e"></div>
<div class="a" style="left:100px;top:701px;width:64px;height:2px;background:#217346"></div>
<span class="t" style="transform:scaleX(0.9465);left:112px;top:684px;font-size:13px;font-weight:bold;color:#217346">sheet1</span>
<svg class="a" style="left:26px;top:687px" width="6" height="9"><path d="M5 0v8l-5-4z" fill="#c3c3c3"/></svg>
<svg class="a" style="left:55px;top:687px" width="6" height="9"><path d="M0 0v8l5-4z" fill="#c3c3c3"/></svg>
<svg class="a" style="left:196px;top:683px" width="18" height="18" fill="none" stroke="#666"><circle cx="9" cy="9" r="7.500" stroke-width="1.200"/><path d="M9 5v8M5 9h8" stroke-width="1.600"/></svg>
<div class="a" style="left:819px;top:687px;width:2px;height:2px;background:#aaa;box-shadow:0 4px #aaa,0 8px #aaa"></div>
<div class="a" style="left:836px;top:685px;width:509px;height:15px;background:#dbdbdb"></div>
<div class="a" style="left:836px;top:685px;width:15px;height:15px;background:#fff;border:1px solid #ababab"></div>
<svg class="a" style="left:841px;top:689px" width="5" height="8"><path d="M4.500 0v7l-4.500-3.500z" fill="#555"/></svg>
<div class="a" style="left:1330px;top:685px;width:15px;height:15px;background:#fff;border:1px solid #ababab"></div>
<svg class="a" style="left:1336px;top:689px" width="5" height="8"><path d="M0 0v7l4.500-3.500z" fill="#555"/></svg>
<div class="a" style="left:1130px;top:685px;width:123px;height:15px;background:#fff;border:1px solid #ababab"></div>
<!-- ===== status bar ===== -->
<div class="a" style="left:0;top:706px;width:1366px;height:1px;background:#c8c8c8"></div>
<span class="t" style="transform:scaleX(0.9023);left:7.500px;top:709px;font-size:11.500px">Ready</span>
<span class="t" style="transform:scaleX(1.0049);left:54px;top:709px;font-size:11.500px">3 of 10960 records found</span>
<div class="a" style="left:1074px;top:707px;width:38px;height:21px;background:#c6c6c6"></div>
<svg class="a" style="left:1086px;top:710px" width="14" height="14" fill="none" stroke="#666"><path d="M.500 .500h12v12h-12zM.500 4.500h12M.500 8.500h12M4.500 .500v12M8.500 .500v12" stroke-width="1.100"/></svg>
<svg class="a" style="left:1124px;top:710px" width="14" height="14" fill="none" stroke="#666"><path d="M.500 .500h13v12h-13z" stroke-width="1.100"/><path d="M3.500 3.500h7v6h-7zM5 5.500h4M5 7.500h4"/></svg>
<svg class="a" style="left:1162px;top:710px" width="14" height="14" fill="none" stroke="#666"><path d="M.500 .500h13v12h-13z" stroke-width="1.100"/><path d="M3.500 .500v6h10M8.500 .500v6"/></svg>
<div class="a" style="left:1193px;top:716px;width:6px;height:2px;background:#555"></div>
<div class="a" style="left:1203px;top:717px;width:100px;height:1px;background:#999"></div>
<div class="a" style="left:1250px;top:711px;width:4px;height:11px;background:#555"></div>
<div class="a" style="left:1307px;top:716px;width:8px;height:2px;background:#555"></div>
<div class="a" style="left:1310px;top:713px;width:2px;height:8px;background:#555"></div>
<span class="t" style="transform:scaleX(0.8837);left:1331px;top:709px;font-size:11.500px">100%</span>
<!-- ===== watermark ===== -->
<span class="t" style="transform:scaleX(1.0137);left:1073px;top:650px;font-size:19.500px;line-height:24px;height:24px;color:rgba(125,125,125,.43)">Activate Windows</span>
<span class="t" style="transform:scaleX(1.0633);left:1073.500px;top:676px;font-size:14px;line-height:18px;height:18px;color:rgba(125,125,125,.43)">Go to Settings to activate Windows.</span>
<!-- ===== taskbar ===== -->
<svg class="a" style="left:15.500px;top:739.500px" width="17" height="17" viewBox="0 0 18 18" fill="#fff"><path d="M0 2.500l7.300-1v7h-7.300zM8.300 1.350l9.200-1.350v8.500h-9.200zM0 9.500h7.300v7l-7.300-1zM8.300 9.500h9.200v8.500l-9.200-1.350z"/></svg>
<div class="a" style="left:48px;top:728px;width:288px;height:40px;background:#f3f3f3;border:1px solid #d9d9d9;border-bottom:0"></div>
<svg class="a" style="left:59px;top:739px" width="18" height="18" viewBox="0 0 18 18" fill="none" stroke="#333" stroke-width="1.300"><circle cx="11" cy="6.800" r="5.500"/><path d="M7 11l-6 6"/></svg>
<span class="t" style="transform:scaleX(0.9655);left:88px;top:739px;font-size:15px;line-height:20px;height:20px;color:#3b3b3b">Type here to search</span>
<svg class="a" style="left:351px;top:739px" width="18" height="17" viewBox="0 0 18 17" fill="none" stroke="#fff" stroke-width="1.200"><rect x="2.100" y="5.600" width="9.800" height="6"/><path d="M1.200 3.600v-1.500h10.600v1.500M1.200 13.500v1.500h10.600v-1.500M15.400 .800v15.500"/><rect x="14.100" y="5.400" width="2.800" height="2.800" fill="#fff" stroke="none"/></svg>
<svg class="a" style="left:399px;top:736px" width="24" height="24" viewBox="0 0 24 24" stroke-width="3" stroke-linejoin="round"><defs><linearGradient id="cp1" x1="0" y1="0" x2="0" y2="1"><stop offset="0" stop-color="#2384f0"/><stop offset=".450" stop-color="#3cc6a0"/><stop offset=".780" stop-color="#f3d322"/><stop offset="1" stop-color="#f07a22"/></linearGradient><linearGradient id="cp2" x1="0" y1="0" x2="0" y2="1"><stop offset="0" stop-color="#a457f2"/><stop offset=".500" stop-color="#f0509a"/><stop offset="1" stop-color="#ff9a3c"/></linearGradient></defs>
<path d="M5 3.200h10.500l-4.500 12.800h-8.500z" fill="url(#cp1)" stroke="url(#cp1)"/><path d="M13.200 9h8.300l-2 11.500h-10z" fill="url(#cp2)" stroke="url(#cp2)"/><path d="M12.300 6.500l-3.800 11" stroke="#3a2e27" stroke-width="1.300" fill="none"/><path d="M14.500 1.800h1.500a2.500 2.500 0 0 1 2.300 3l-1 2.800h-3.600l1.300-3.500z" fill="#1648c8" stroke="none"/><path d="M9.500 22h-1.500a2.500 2.500 0 0 1-2.300-3l.600-1.500h3.800l-1 2.500z" fill="#e8432e" stroke="none"/></svg>
<svg class="a" style="left:448px;top:736px" width="24" height="24" viewBox="0 0 24 24"><defs><linearGradient id="eg1" x1="0" y1="1" x2="1" y2="0"><stop offset="0" stop-color="#1b9de2"/><stop offset=".600" stop-color="#35c1b5"/><stop offset="1" stop-color="#7ad84a"/></linearGradient></defs>
<circle cx="12" cy="12" r="12" fill="#0c59a4"/><path d="M12 0a12 12 0 0 1 12 10c0 3.500-2.500 5.500-5.500 5.500-2.500 0-4-1-4-2.500 0-.800.800-1.200.800-2.500 0-2-2-4-5-4-4 0-7.500 3-10.300 5.500a12 12 0 0 1 12-12z" fill="url(#eg1)"/><path d="M0 12c1-4 5-6.500 9-6.500-3 1-4.500 4-4.500 7 0 5 4 9.500 10 9a12 12 0 0 1-14.500-9.500z" fill="#1b8fe0"/></svg>
<svg class="a" style="left:498px;top:738px" width="22" height="20" viewBox="0 0 22 20"><path d="M0 1.500h8l1.500 2h12.500v3h-22z" fill="#e8a91a"/><rect x="0" y="4.500" width="22" height="14.500" fill="#fbd25c"/><path d="M5 19v-6.500h12v6.500h-3v-3.500h-6v3.500z" fill="#3f8fd6"/></svg>
<svg class="a" style="left:546px;top:736px" width="24" height="23" viewBox="0 0 24 23"><rect x="11" y="5.500" width="13" height="12" fill="#1d7ad6"/><path d="M12.500 7l5.500 4.500 5.500-4.500v9h-11z" fill="#fff"/><path d="M0 2.500l13.500-2.500v23l-13.500-2.500z" fill="#0a64c0"/><ellipse cx="6.800" cy="11.500" rx="3.200" ry="3.900" fill="none" stroke="#fff" stroke-width="1.800"/></svg>
<svg class="a" style="left:594px;top:736px" width="25" height="24" viewBox="0 0 24 24"><circle cx="12" cy="12" r="12" fill="#e74335"/><path d="M12 12l-10.400-6a12 12 0 0 0 4.900 16.700z" fill="#31a652"/><path d="M12 12l10.400-6h-.100a12 12 0 0 1-10.300 18l-5.500-1.300z" fill="#fbc116"/><path d="M12 12l10.400-6a12 12 0 0 0-20.800 0z" fill="#e74335"/><circle cx="12" cy="12" r="5.600" fill="#fff"/><circle cx="12" cy="12" r="4.400" fill="#4285f4"/></svg>
<svg class="a" style="left:645px;top:737px" width="22" height="21" viewBox="0 0 22 21"><circle cx="18.500" cy="5" r="2.400" fill="#6a74d8"/><circle cx="12.500" cy="3.300" r="3.300" fill="#6a74d8"/><path d="M15 8h7v6.500a3.500 3.500 0 0 1-7 0z" fill="#5560c8"/><path d="M7 8h10.500v8a5.200 5.200 0 0 1-10.500 0z" fill="#6a74d8"/><rect x="0" y="5" width="11.500" height="11.500" rx="1" fill="#4a53bc"/><path d="M3 8h5.500v1.600h-1.900v5h-1.700v-5h-1.900z" fill="#fff"/></svg>
<svg class="a" style="left:693px;top:737px" width="34" height="28" viewBox="0 0 34 28"><circle cx="18.500" cy="5" r="2.400" fill="#6a74d8"/><circle cx="12.500" cy="3.300" r="3.300" fill="#6a74d8"/><path d="M15 8h7v6.500a3.500 3.500 0 0 1-7 0z" fill="#5560c8"/><path d="M7 8h10.500v8a5.200 5.200 0 0 1-10.500 0z" fill="#6a74d8"/><rect x="0" y="5" width="11.500" height="11.500" rx="1" fill="#4a53bc"/><path d="M3 8h5.500v1.600h-1.900v5h-1.700v-5h-1.900z" fill="#fff"/><circle cx="15.500" cy="15.500" r="6" fill="#d5281e"/><circle cx="24.500" cy="18" r="8" fill="#3a2a2a" stroke="#ddd" stroke-width="1"/><text x="24.500" y="23" font-size="13" font-weight="bold" font-family="Liberation Sans,sans-serif" fill="#fff" text-anchor="middle">7</text></svg>
<div class="a" style="left:730px;top:728px;width:48px;height:38px;background:#63584f"></div>
<svg class="a" style="left:742px;top:736px" width="24" height="23" viewBox="0 0 24 23"><rect x="11" y="3" width="12" height="17" fill="#fff" stroke="#1e7145"/><path d="M14 5.500h3.500v2.500h-3.500zM18.500 5.500h3v2.500h-3zM14 9h3.500v2.500h-3.500zM18.500 9h3v2.500h-3zM14 12.500h3.500v2.500h-3.500zM18.500 12.500h3v2.500h-3zM14 16h3.500v2h-3.500zM18.500 16h3v2h-3z" fill="#1e7145"/><path d="M0 2.500l13.500-2.500v23l-13.500-2.500z" fill="#1e7145"/><path d="M3.500 7h2.300l1.400 2.900 1.500-2.900h2.200l-2.500 4.500 2.600 4.500h-2.300l-1.600-3-1.600 3h-2.200l2.600-4.500z" fill="#fff"/></svg>
<div class="a" style="left:440px;top:766px;width:40px;height:2px;background:#76b9ed"></div>
<div class="a" style="left:489px;top:766px;width:40px;height:2px;background:#76b9ed"></div>
<div class="a" style="left:587px;top:766px;width:40px;height:2px;background:#76b9ed"></div>
<div class="a" style="left:685px;top:766px;width:40px;height:2px;background:#76b9ed"></div>
<div class="a" style="left:730px;top:766px;width:48px;height:2px;background:#76b9ed"></div>
<svg class="a" style="left:894px;top:739px" width="24" height="18" viewBox="0 0 24 18"><rect x="3" y="1.500" width="21" height="16" rx="2" fill="#1b6fc4"/><rect x="0" y="0" width="20" height="17" rx="2.500" fill="#3cb9f2"/><rect x="3.500" y="3.500" width="2.500" height="7" rx="1" fill="#fff"/><rect x="8.800" y="7.500" width="2.500" height="3" rx="1" fill="#fff"/><rect x="14" y="5" width="2.500" height="5.500" rx="1" fill="#fff"/><rect x="3" y="12.500" width="14" height="1.800" fill="#7fd4f8"/></svg>
<span class="t w" style="transform:scaleX(0.9757);left:926px;top:738px;font-size:14px;line-height:20px;height:20px">Zee Entertainment sh...</span>
<svg class="a" style="left:1092px;top:743px" width="14" height="9" fill="none" stroke="#fff" stroke-width="1.400"><path d="M1 8l6-6.500l6 6.500"/></svg>
<svg class="a" style="left:1117px;top:739px" width="13" height="18" viewBox="0 0 13 18" fill="none" stroke="#fff" stroke-width="1.200"><rect x="1" y="5" width="7.500" height="8" rx="1.500"/><path d="M8.500 8l3.500-2v6l-3.500-2M2 3c2-2 6-2 8 0M2 15.500c2 2 6 2 8 0"/></svg>
<div class="a" style="left:1136px;top:728px;width:22px;height:38px;background:#4b413b"></div>
<svg class="a" style="left:1138px;top:742px" width="18" height="12" viewBox="0 0 18 12" fill="none" stroke="#fff" stroke-width="1.200"><rect x="5" y="2.500" width="11" height="7"/><rect x="6.500" y="4" width="5" height="4" fill="#fff" stroke="none"/><path d="M16.500 4.500v3M1 .500v3M4 .500v3M.500 3.500h4v2a2 2 0 0 1-4 0zM2.500 7.500v3h3"/></svg>
<svg class="a" style="left:1165px;top:742px" width="15" height="14" viewBox="0 0 15 14" fill="none" stroke="#fff" stroke-width="1.300"><path d="M1 13a12 12 0 0 1 12-12M4.500 13a8.500 8.500 0 0 1 8.500-8.500M8 13a5 5 0 0 1 5-5"/><circle cx="12.300" cy="12.300" r="1.500" fill="#fff" stroke="none"/></svg>
<svg class="a" style="left:1186px;top:740px" width="18" height="15" viewBox="0 0 18 15" fill="none" stroke="#fff" stroke-width="1.200"><path d="M1 5h3l4-4v13l-4-4h-3z"/><path d="M10.500 5a3.500 3.500 0 0 1 0 5M12.800 3a6.500 6.500 0 0 1 0 9M15 1a9.500 9.500 0 0 1 0 13"/></svg>
<span class="t w" style="transform:scaleX(0.8304);left:1213.500px;top:739px;font-size:12.500px">ENG</span>
<span class="t w" style="transform:scaleX(0.8312);left:1265px;top:731px;font-size:12.500px">13:38</span>
<span class="t w" style="transform:scaleX(0.8991);left:1249.500px;top:748.500px;font-size:12.500px">17-06-2025</span>
<svg class="a" style="left:1324px;top:739px" width="26" height="26" viewBox="0 0 26 26"><path d="M1 1h16v12h-10v3.500l-3.500-3.500h-2.500z" fill="#fff"/><path d="M3.500 4h11M3.500 6.500h11M3.500 9h11" stroke="#382e28" stroke-width="1"/><circle cx="16.500" cy="16.500" r="8" fill="#3a3030" stroke="#777" stroke-width="1"/><text x="16.500" y="21" font-size="12.500" font-weight="bold" font-family="Liberation Sans,sans-serif" fill="#fff" text-anchor="middle">2</text></svg>
<div class="a" style="left:1361px;top:728px;width:1px;height:40px;background:#6a6058"></div>
</body></html>
